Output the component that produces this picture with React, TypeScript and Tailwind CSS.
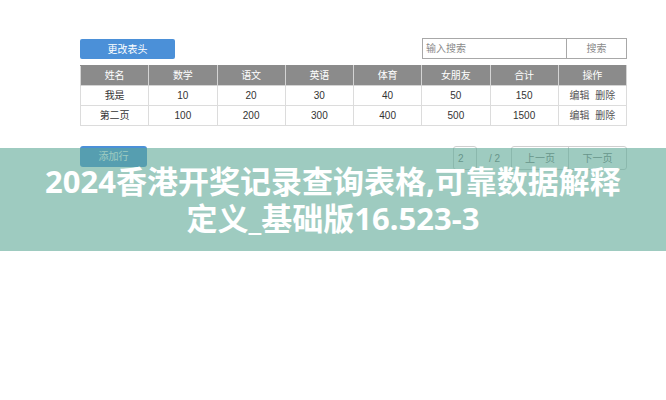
const headers = ["姓名", "数学", "语文", "英语", "体育", "女朋友", "合计", "操作"];

const rows = [
  ["我是", "10", "20", "30", "40", "50", "150"],
  ["第二页", "100", "200", "300", "400", "500", "1500"],
];

export default function App() {
  return (
    <div className="relative w-[666px] h-[400px] bg-white overflow-hidden font-['Liberation_Sans','Noto_Sans_CJK_SC',sans-serif]">
      <div className="pt-[38px] pl-[80px] w-[627px]">
        {/* toolbar */}
        <div className="flex items-center justify-between h-[21px]">
          <button className="w-[95px] h-[20px] mt-[1px] rounded-[2px] bg-[#4b90d8] text-white text-[10px]">
            更改表头
          </button>
          <div className="flex h-[21px] border border-[#a8a8a8] w-[205px]">
            <div className="flex-1 flex items-center px-[3px] text-[10px] text-[#8a8a8a]">输入搜索</div>
            <div className="w-[60px] border-l border-[#a8a8a8] flex items-center justify-center text-[10px] text-[#8a8a8a]">
              搜索
            </div>
          </div>
        </div>

        {/* table */}
        <table className="mt-[6px] w-[547px] border-collapse table-fixed text-[10px]">
          <thead>
            <tr className="bg-[#8b8b8b] text-white h-[20px]">
              {headers.map((h) => (
                <th key={h} className="font-normal border border-[#d4d4d4] border-t-[#8b8b8b]">
                  {h}
                </th>
              ))}
            </tr>
          </thead>
          <tbody>
            {rows.map((r, i) => (
              <tr key={i} className="h-[20px] text-[#333]">
                {r.map((c, j) => (
                  <td key={j} className="text-center border border-[#dcdcdc]">
                    {c}
                  </td>
                ))}
                <td className="text-center border border-[#dcdcdc] text-[#555]">
                  编辑&nbsp;&nbsp;删除
                </td>
              </tr>
            ))}
          </tbody>
        </table>

        {/* bottom bar */}
        <div className="mt-[20px] flex items-start justify-between">
          <button className="w-[67px] h-[21px] rounded-[3px] bg-[#4b90d8] text-white text-[10px]">
            添加行
          </button>
          <div className="flex items-center text-[10px] text-[#777]">
            <div className="w-[24px] h-[24px] border border-[#cfcfcf] rounded-[3px] flex items-center pl-[4px]">2</div>
            <div className="w-[34px] pl-[12px]">/ 2</div>
            <div className="flex h-[24px] border border-[#cfcfcf] rounded-[3px]">
              <div className="w-[57px] flex items-center justify-center border-r border-[#cfcfcf]">上一页</div>
              <div className="w-[57px] flex items-center justify-center">下一页</div>
            </div>
          </div>
        </div>
      </div>

      {/* overlay banner */}
      <div className="absolute left-0 top-[148px] w-full h-[103px] bg-[rgba(93,168,150,0.6)] flex flex-col items-center justify-center text-white font-bold text-[31px] leading-[37px] font-['Noto_Sans','Noto_Sans_CJK_SC',sans-serif]">
        <div>2024香港开奖记录查询表格,可靠数据解释</div>
        <div>定义_基础版16.523-3</div>
      </div>
    </div>
  );
}
